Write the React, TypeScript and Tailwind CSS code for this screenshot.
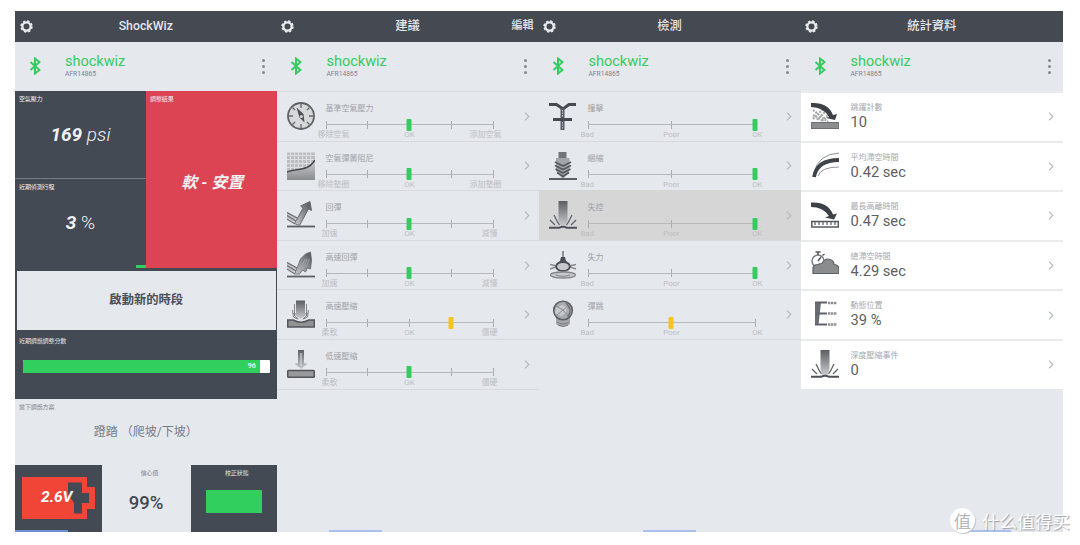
import { type ReactNode } from "react";

const FONT = "font-[Roboto,'Noto_Sans_CJK_TC',sans-serif]";

type Tone = "green" | "yellow";

type Tuning = {
  icon: ReactNode;
  label: string;
  marks: string[];
  ticks: number;
  value: number;
  tone: Tone;
  active?: boolean;
};

function Svg({ children }: { children: ReactNode }) {
  return (
    <svg viewBox="0 0 28 28" className="h-7 w-7 shrink-0" fill="none">
      <defs>
        <linearGradient id="fade" x1="0" y1="0" x2="0" y2="1">
          <stop offset="0" stopColor="#5c5e63" />
          <stop offset="1" stopColor="#c9cbce" />
        </linearGradient>
        <linearGradient id="rise" x1="0" y1="1" x2="1" y2="0">
          <stop offset="0" stopColor="#c9cbce" />
          <stop offset="1" stopColor="#4e5156" />
        </linearGradient>
        <linearGradient id="sink" x1="0" y1="0" x2="0" y2="1">
          <stop offset="0" stopColor="#cfcfd0" />
          <stop offset="1" stopColor="#8b8c8f" />
        </linearGradient>
      </defs>
      {children}
    </svg>
  );
}

const GaugeIcon = () => (
  <Svg>
    <circle cx="14" cy="14" r="13" fill="#d7d8da" stroke="#606266" strokeWidth="1.8" />
    <path d="M14 2v4M14 22v4M2 14h4M22 14h4M5.5 5.5l2.6 2.6M19.9 19.9l2.6 2.6M22.5 5.5l-2.6 2.6M5.5 22.5l2.6-2.6" stroke="#65676b" strokeWidth="1.3" />
    <path d="M9.5 5.5l7 6.500 1 8.500-5-5z" fill="#4d5056" />
    <circle cx="14.4" cy="14.5" r="1.5" fill="#d7d8da" />
  </Svg>
);

const CurveIcon = () => (
  <Svg>
    <path d="M0 .5h28v20H0z" fill="#bcbdbf" />
    <path d="M0 3.5h28M0 7.5h28M0 11.5h28M0 15.5h28M3.5 0v20M7.5 0v20M11.5 0v20M15.5 0v20M19.5 0v20M23.5 0v20" stroke="#dcdee3" strokeWidth="1" />
    <path d="M0 20c9-4 21 0 28-12v20H0z" fill="url(#sink)" />
    <path d="M0 20c9-4 21 0 28-12" stroke="#45484d" strokeWidth="1.5" />
  </Svg>
);

const ReboundIcon = ({ split = false }: { split?: boolean }) => (
  <Svg>
    <path d="M0 25.500h28" stroke="#5c5f64" strokeWidth="1.8" />
    <path d="M0 11l10 5.500L7 21l-7-4z" fill="#c2c4c7" />
    <path d="M0 11.500l11 6M0 14.500l9 5.500M0 18l8 5" stroke="#6c6f74" strokeWidth="1.300" />
    {split ? (
      <>
        <path d="M7.500 23l3-7 3-8 5-5 5-2 1 8-1 9-3-1-2 4-3-2-3 4z" fill="url(#rise)" stroke="#6b6e73" strokeWidth=".9" />
        <path d="M13 20l5-12M16 18l4-10M19.500 16l2.500-8" stroke="#a9abaf" strokeWidth=".8" />
      </>
    ) : (
      <path d="M7.500 22.500l8.500-15.500-2.500-2L23 .5 24.500 9.500l-3-1.500-9 16.500z" fill="url(#rise)" stroke="#6b6e73" strokeWidth="1" />
    )}
  </Svg>
);

const Block = ({ y = 20 }: { y?: number }) => (
  <rect x=".7" y={y} width="26.6" height="6.6" rx=".8" fill="#98999b" stroke="#54565b" strokeWidth="1.5" />
);

const FastCompressionIcon = () => (
  <Svg>
    <path d="M9 .5h9V13h4l-8.5 6L5 13h4z" fill="url(#fade)" />
    <path d="M7.500 4v12l4 3M19.500 4v12l-4 3M5.500 10l1 7 4 2M21.500 10l-1 7-4 2" stroke="#808286" />
    <path d="M.7 20h5.300q8 4.500 16 0h5.300v7H.7z" fill="#919294" stroke="#54565b" strokeWidth="1.5" />
  </Svg>
);

const SlowCompressionIcon = () => (
  <Svg>
    <path d="M11 0h6v13.500h3.500l-6.500 5.500-6.500-5.500H11z" fill="url(#fade)" />
    <path d="M14 3v13" stroke="#d5d6d8" strokeWidth="1.2" />
    <Block y={20.6} />
  </Svg>
);

const PogoIcon = () => (
  <Svg>
    <path d="M0 2.500h7.500l6.500 4.500 6-4.500h7" stroke="#454950" strokeWidth="3" />
    <path d="M13.500 6v22" stroke="#555960" strokeWidth="4" />
    <path d="M13.500 8v7M13.500 20v7" stroke="#b9bbc0" strokeWidth="1.2" strokeDasharray="1.500 1" />
    <path d="M4 17.500h19" stroke="#454950" strokeWidth="3" />
  </Svg>
);

const PackingIcon = () => (
  <Svg>
    <path d="M9.500 0h8v8h-8z" fill="#717479" />
    <path d="M7 6h13.500v13l-6.500 8-7-8z" fill="#a3a5a9" />
    <path d="M6 10l8 4 8-4M6 13.500l8 4 8-4M6.500 17l7.500 4 7.500-4M8 20.500l6 4 6-4" stroke="#55585d" strokeWidth="1.6" />
    <path d="M0 27h28" stroke="#4b4e54" strokeWidth="1.8" />
  </Svg>
);

const BottomOutIcon = () => (
  <Svg>
    <path d="M9.500 0h9v19l-2 6h-5l-2-6z" fill="url(#fade)" />
    <path d="M9 22l-4-8M6 24l-5-5M19 22l4-8M22 24l5-5M10.500 24l-2.500-4M17.500 24l2.500-4" stroke="#5f6267" strokeWidth="1.300" />
    <path d="M0 26.800h10q4-2 8 0h10" stroke="#4e5157" strokeWidth="2" />
  </Svg>
);

const HarshIcon = () => (
  <Svg>
    <path d="M14 0v7" stroke="#85888d" strokeWidth="1.800" />
    <path d="M11 10l1-4h4l1 4 4 3-1 4H8l-1-4z" fill="#4c5056" />
    <path d="M1 13.500l7 1.500M27 13.500l-7 1.500M1 18l6-2M27 18l-6-2" stroke="#888a8f" strokeWidth="1.500" />
    <ellipse cx="14" cy="15.500" rx="6.800" ry="4.500" fill="#c6c8cb" stroke="#4c5056" strokeWidth="1.800" />
    <ellipse cx="14" cy="24" rx="12.500" ry="3" fill="#c6c8cc" stroke="#85888d" strokeWidth="1.300" />
    <path d="M7 24q7 2.500 14 0" stroke="#85888d" strokeWidth="1.200" />
  </Svg>
);

const BallIcon = () => (
  <Svg>
    <path d="M7 17h14v7q-7 6-14 0z" fill="#a4a6a9" />
    <path d="M8 22q6 4 12 0M9 25q5 3 10 0" stroke="#7c7e82" />
    <circle cx="14" cy="10.500" r="9.300" fill="#a9abae" stroke="#5d6065" strokeWidth="1.600" />
    <path d="M7 8l6-3 5 2-1 6-5 3-6-3z" fill="#c8cacd" />
    <path d="M7 6l7 4-6 5M14 10l6-5M14 10l5 6" stroke="#8b8d91" />
    <path d="M17 3q7 6 2 14" stroke="#6f7276" strokeWidth="1.600" />
  </Svg>
);

const JumpCountIcon = () => (
  <Svg>
    <path d="M2 8l15 12M2 13l10 6M6 18L16 8M2 17L12 7M11 19l7-7" stroke="#a9aaac" strokeWidth="2.2" strokeDasharray="2 1" />
    <path d="M0 1q17-1 22 12l4-1-2 6-9-2 3-1Q12 5 0 5z" fill="#3d4147" />
    <rect x=".6" y="20.500" width="27" height="6" fill="#8c8d8f" stroke="#6c6e71" />
  </Svg>
);

const ArcIcon = () => (
  <Svg>
    <path d="M3 21Q7 2 28 1" stroke="#8d8f92" />
    <path d="M3 25Q6 8 28 8" stroke="#3f434a" strokeWidth="3.800" />
    <path d="M7 24Q10 15 28 15" stroke="#939598" />
  </Svg>
);

const LongestJumpIcon = () => (
  <Svg>
    <path d="M0 1.500q17-1 22 12l4-1-3 6-9-2 4-1.500Q12 6 0 6z" fill="#3d4147" />
    <rect x=".8" y="20.500" width="26.500" height="5.500" stroke="#55585d" strokeWidth="1.500" />
    <path d="M4 21v3M8 21v3M12 21v3M16 21v3M20 21v3M24 21v3" stroke="#55585d" strokeWidth="1.200" />
  </Svg>
);

const CloudTimeIcon = () => (
  <Svg>
    <circle cx="7" cy="10" r="6" stroke="#777a7e" strokeWidth="1.400" />
    <path d="M7 4V.5M4.500 1h5M11.500 4.500l2-1.500M7 10l3-4" stroke="#55585d" strokeWidth="1.500" />
    <path d="M2 22.500v-6q1-3 5-3 2-1 4-1 3-6 8-4 4 1 4 5 4 0 5 4v5z" fill="#8b8c8e" stroke="#5c5f63" strokeWidth="1.200" />
  </Svg>
);

const TravelIcon = () => (
  <Svg>
    <path d="M4 2h6L7.500 25H4z" fill="#696c71" />
    <path d="M4 2.500h12M5 13.500h11M4 24.500h12" stroke="#606368" strokeWidth="1.800" />
    <path d="M17 3h9M17 13.500h9M17 24.500h9" stroke="#8e9094" strokeWidth="2.500" strokeDasharray="2.300 .6" />
  </Svg>
);

const SUGGESTIONS: Tuning[] = [
  { icon: <GaugeIcon />, label: "基準空氣壓力", marks: ["移除空氣", "OK", "添加空氣"], ticks: 5, value: 50, tone: "green" },
  { icon: <CurveIcon />, label: "空氣彈簧阻尼", marks: ["移除墊圈", "OK", "添加墊圈"], ticks: 5, value: 50, tone: "green" },
  { icon: <ReboundIcon />, label: "回彈", marks: ["加速", "OK", "減慢"], ticks: 5, value: 50, tone: "green" },
  { icon: <ReboundIcon split />, label: "高速回彈", marks: ["加速", "OK", "減慢"], ticks: 5, value: 50, tone: "green" },
  { icon: <FastCompressionIcon />, label: "高速壓縮", marks: ["柔軟", "OK", "僵硬"], ticks: 5, value: 75, tone: "yellow" },
  { icon: <SlowCompressionIcon />, label: "低速壓縮", marks: ["柔軟", "OK", "僵硬"], ticks: 5, value: 50, tone: "green" },
];

const GRADES = ["Bad", "Poor", "OK"];

const DETECTIONS: Tuning[] = [
  { icon: <PogoIcon />, label: "撞擊", marks: GRADES, ticks: 3, value: 100, tone: "green" },
  { icon: <PackingIcon />, label: "綑縮", marks: GRADES, ticks: 3, value: 100, tone: "green" },
  { icon: <BottomOutIcon />, label: "失控", marks: GRADES, ticks: 3, value: 100, tone: "green", active: true },
  { icon: <HarshIcon />, label: "失力", marks: GRADES, ticks: 3, value: 100, tone: "green" },
  { icon: <BallIcon />, label: "彈跳", marks: GRADES, ticks: 3, value: 50, tone: "yellow" },
];

const STATS = [
  { icon: <JumpCountIcon />, label: "跳躍計數", value: "10" },
  { icon: <ArcIcon />, label: "平均滯空時間", value: "0.42 sec" },
  { icon: <LongestJumpIcon />, label: "最長高離時間", value: "0.47 sec" },
  { icon: <CloudTimeIcon />, label: "總滯空時間", value: "4.29 sec" },
  { icon: <TravelIcon />, label: "動態位置", value: "39 %" },
  { icon: <BottomOutIcon />, label: "深度壓縮事件", value: "0" },
];

function Gear() {
  return (
    <svg viewBox="0 0 14 14" className="h-[13px] w-[13px]" fill="none">
      <circle cx="7" cy="7" r="5.800" stroke="#e8eaed" strokeWidth="1.800" strokeDasharray="2.600 1.955" />
      <circle cx="7" cy="7" r="4.400" stroke="#e8eaed" strokeWidth="2.400" />
    </svg>
  );
}

function Bluetooth() {
  return (
    <svg viewBox="0 0 12 18" className="h-[18px] w-3" fill="none" stroke="#36cb60" strokeWidth="2">
      <path d="M1.500 5l9 8L6 16.500v-15L10.500 5l-9 8" />
    </svg>
  );
}

function Chevron() {
  return (
    <svg viewBox="0 0 6 10" className="h-[9px] w-1.5 shrink-0" fill="none" stroke="#b3b6ba" strokeWidth="1.200">
      <path d="M.8.8L5 5 .8 9.200" />
    </svg>
  );
}

function Screen({ title, action, children }: { title: string; action?: string; children: ReactNode }) {
  return (
    <section className="flex min-w-0 flex-col">
      <header className="grid h-[30.5px] shrink-0 grid-cols-[40px_1fr_40px] items-center bg-[#444952] text-[12.3px] font-medium text-[#e3e5e9]">
        <div className="pl-[4.5px]">
          <Gear />
        </div>
        <h1 className="text-center">{title}</h1>
        <span className="-mr-0.5 pr-[7px] text-right text-[11px] whitespace-nowrap">{action}</span>
      </header>
      <div className="flex h-[49.5px] shrink-0 items-center">
        <div className="w-[50px] pl-[13.5px]">
          <Bluetooth />
        </div>
        <div className="flex-1 pb-px">
          <div className="text-[14.5px] leading-[15px] text-[#36cb60]">shockwiz</div>
          <div className="mt-px text-[6.7px] leading-[8px] text-[#80848d]">AFR14865</div>
        </div>
        <div className="mr-3 flex flex-col gap-[3px]">
          <i className="h-[3px] w-[3px] rounded-full bg-[#85888d]" />
          <i className="h-[3px] w-[3px] rounded-full bg-[#85888d]" />
          <i className="h-[3px] w-[3px] rounded-full bg-[#85888d]" />
        </div>
      </div>
      {children}
    </section>
  );
}

function Scale({ item }: { item: Tuning }) {
  return (
    <div className="w-[168px]">
      <div className="relative mt-[5px] flex h-[9px] items-center justify-between">
        <div className="absolute inset-x-0 h-px bg-[#b6b8bc]" />
        {Array.from({ length: item.ticks }, (_, i) => (
          <i key={i} className="h-2 w-px bg-[#aaacb1]" />
        ))}
        <i
          className={
            item.tone === "green"
              ? "absolute h-3 w-[5px] -translate-x-1/2 rounded-[1px] bg-[#36cb60]"
              : "absolute h-3 w-[5px] -translate-x-1/2 rounded-[1px] bg-[#f4c522]"
          }
          style={{ left: `calc(${item.value}% - 0.5px)` }}
        />
      </div>
      <div
        className={
          item.ticks === 3
            ? "-mx-[7px] mt-px grid grid-cols-[15px_1fr_15px] text-center text-[7.8px] leading-[10px] text-[#bcbec2]"
            : item.marks[0].length === 4
              ? "-mx-2 mt-px grid grid-cols-[40px_1fr_40px] text-center text-[8px] leading-[10px] text-[#bcbec2]"
              : "-mx-1 mt-px grid grid-cols-[40px_1fr_40px] text-center text-[8px] leading-[10px] text-[#bcbec2]"
        }
      >
        {item.marks.map((mark, i) => (
          <span key={mark} className={i === 0 ? "text-left whitespace-nowrap" : i === 2 ? "text-right whitespace-nowrap" : ""}>
            {mark}
          </span>
        ))}
      </div>
    </div>
  );
}

function TuningRow({ item }: { item: Tuning }) {
  return (
    <div
      className={
        item.active
          ? "flex h-[49.6px] items-start border-t border-[#d4d6da] bg-[#d6d6d7] pl-[10px]"
          : "flex h-[49.6px] items-start border-t border-[#d8dadf] pl-[10px]"
      }
    >
      <div className="mr-[11px] pt-2.5">{item.icon}</div>
      <div className="flex-1 pt-[11px]">
        <div className="text-[8px] leading-[12px] text-[#a0a3a7]">{item.label}</div>
        <Scale item={item} />
      </div>
      <div className="flex h-full items-center pr-[9px]">
        <Chevron />
      </div>
    </div>
  );
}

function Caption({ children }: { children: ReactNode }) {
  return <div className="text-[6px] leading-[8px] tracking-[-0.1px]">{children}</div>;
}

function Dashboard() {
  return (
    <div className="flex flex-1 flex-col">
      <div className="grid h-[177px] grid-cols-[131px_1fr] text-[#f0f1f3]">
        <div className="flex flex-col bg-[#444a53]">
          <div className="h-[88px] border-b border-[#777c84] pt-1 pl-1">
            <Caption>空氣壓力</Caption>
            <div className="pt-[20px] pr-1 text-center text-[19px] leading-[24px] italic">
              <b>169</b> <span className="font-light">psi</span>
            </div>
          </div>
          <div className="flex flex-1 flex-col pt-1 pl-1">
            <Caption>近期偵測行程</Caption>
            <div className="pt-[20px] pr-1 text-center text-[19px] leading-[24px] italic">
              <b>3</b> <span className="font-light not-italic">%</span>
            </div>
            <div className="mt-auto h-[3px] w-2.5 self-end bg-[#31cf5d]" />
          </div>
        </div>
        <div className="bg-[#dc4453] pt-1 pl-1">
          <Caption>調整結果</Caption>
          <div className="pt-[68px] pr-0.5 text-center text-[16px] leading-[24px] font-bold italic">軟 - 安置</div>
        </div>
      </div>
      <button className="h-[64px] border-2 border-t-[3px] border-r-[1px] border-[#444a53] text-[12.3px] font-bold text-[#4b5059]">
        啟動新的時段
      </button>
      <div className="h-[67px] bg-[#444a53] px-1 pt-[5px] text-[#e3e5e8]">
        <Caption>近期調諧調整分數</Caption>
        <div className="mt-[15px] mr-[3px] ml-1 flex h-[12.5px] overflow-hidden rounded-[1px] bg-white">
          <div className="w-[96%] bg-[#31cf5d] pr-1 text-right text-[7px] leading-[12.5px] font-medium text-white">96</div>
        </div>
      </div>
      <div className="h-[66px] pt-1 pl-1 text-[#80848c]">
        <Caption>當下調諧方案</Caption>
        <div className="pt-[12px] pr-1 text-center text-[12px] leading-[18px] text-[#777c84]">蹬踏 （爬坡/下坡）</div>
      </div>
      <div className="grid flex-1 grid-cols-[87px_89px_1fr]">
        <div className="bg-[#444a53] pt-3 pl-[7px]">
          <div className="relative h-[42px] w-[73px]">
            <svg viewBox="0 0 73 42" className="h-full w-full">
              <path d="M0 0h65v10h8v22h-8v10H0z" fill="#f14537" />
              <path d="M46 5.500h14v10.500h7v10h-7v10.500h-8V26l-6-9z" fill="#444a53" />
            </svg>
            <span className="absolute inset-y-0 left-[19px] flex items-center text-[15.5px] font-bold text-white italic">2.6V</span>
          </div>
        </div>
        <div className="pt-1 pl-1.5 text-center text-[#787d85]">
          <Caption>信心值</Caption>
          <div className="pt-[14px] pr-[7px] text-[18.5px] leading-[24px] font-medium text-[#444952]">99%</div>
        </div>
        <div className="bg-[#444a53] pt-1 text-center text-[#e3e5e8]">
          <div className="pr-0.5 pl-2">
            <Caption>校正狀態</Caption>
          </div>
          <div className="mt-[13px] ml-[15px] h-[23px] w-[56px] bg-[#31cf5d]" />
        </div>
      </div>
    </div>
  );
}

function Watermark() {
  return (
    <div className="absolute top-[508px] left-[950px] flex items-center gap-2 font-['Noto_Sans_CJK_SC',sans-serif] whitespace-nowrap">
      <div className="flex h-[25px] w-[25px] items-center justify-center rounded-full bg-white text-[17px] leading-none text-[#b3b6bb] shadow-[1px_1px_1px_#c3c5c9]">值</div>
      <span className="-ml-px text-[17.6px] leading-[25px] text-white [text-shadow:1px_1px_1px_#999ca1]">什么值得买</span>
    </div>
  );
}

export default function App() {
  return (
    <main className={`relative h-[545px] w-[1080px] overflow-hidden bg-white pt-[11px] pl-[15px] ${FONT}`}>
      <div className="grid h-[520.5px] w-[1048px] grid-cols-[261.500px_262px_262px_262.500px] bg-[#e5e8ed]">
        <Screen title="ShockWiz">
          <Dashboard />
        </Screen>
        <Screen title="建議" action="編輯">
          {SUGGESTIONS.map((item) => (
            <TuningRow key={item.label} item={item} />
          ))}
          <div className="border-t border-[#d8dadf]" />
        </Screen>
        <Screen title="檢測">
          {DETECTIONS.map((item) => (
            <TuningRow key={item.label} item={item} />
          ))}
          <div className="border-t border-[#d8dadf]" />
        </Screen>
        <Screen title="統計資料">
          {STATS.map((stat) => (
            <div key={stat.label} className="flex h-[49.6px] items-start border-t-2 border-[#eaebed] bg-white pl-[10px]">
              <div className="mr-3 pt-[9px]">{stat.icon}</div>
              <div className="flex-1 pt-[9px]">
                <div className="text-[8px] leading-[12px] text-[#a5a8ac]">{stat.label}</div>
                <div className="text-[14.7px] leading-[17px] text-[#5d6066]">{stat.value}</div>
              </div>
              <div className="flex h-full items-center pr-[9px]">
                <Chevron />
              </div>
            </div>
          ))}
        </Screen>
      </div>
      <i className="absolute top-[530px] left-[15px] h-0.5 w-[53px] bg-[#6d8ed0]" />
      <i className="absolute top-[530px] left-[329px] h-0.5 w-[53px] bg-[#abc0ec]" />
      <i className="absolute top-[530px] left-[643px] h-0.5 w-[53px] bg-[#abc0ec]" />
      <i className="absolute top-[530px] left-[958px] h-0.5 w-[53px] bg-[#abc0ec]" />
      <Watermark />
    </main>
  );
}
